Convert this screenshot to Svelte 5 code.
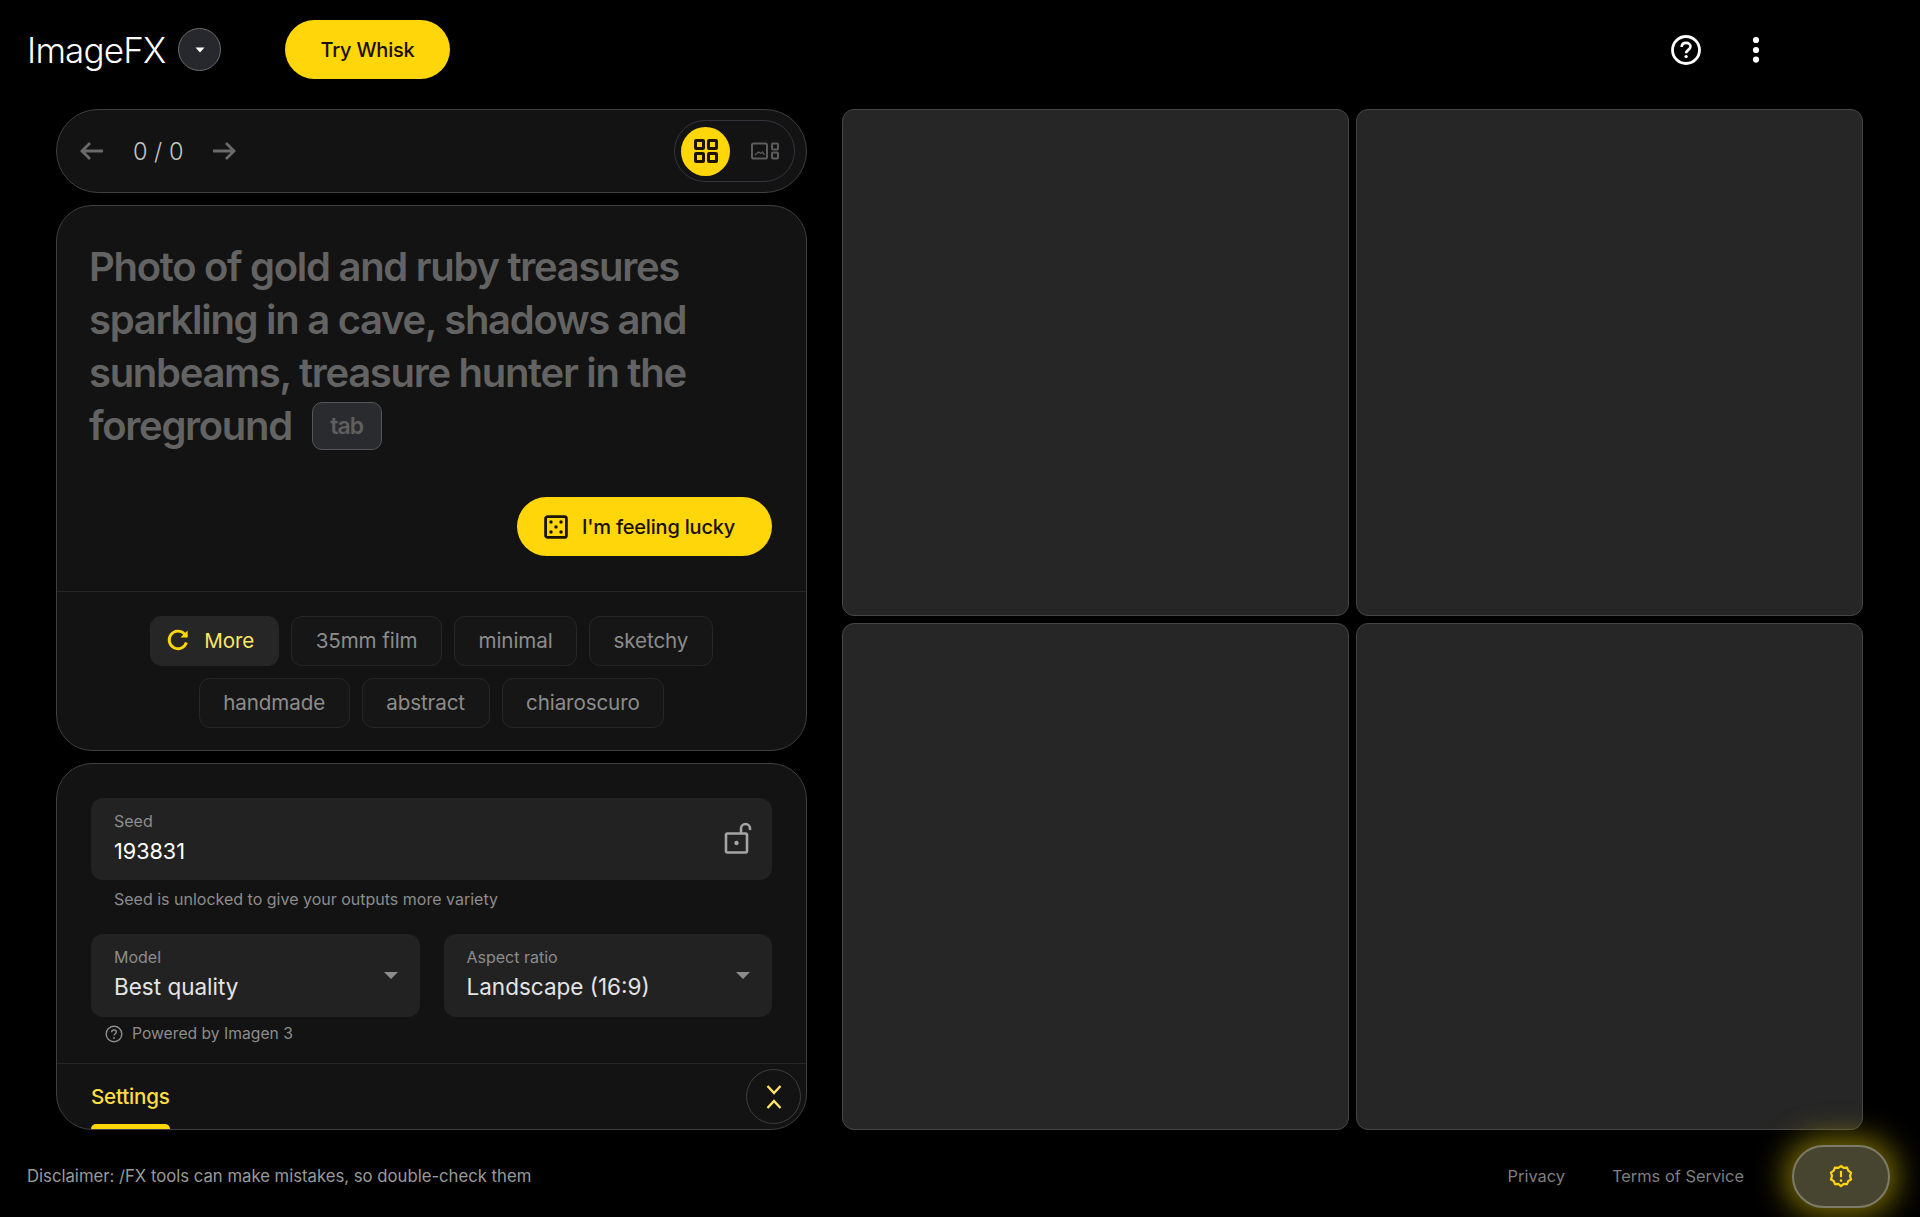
<script>
  const chipRows = [
    ['35mm film', 'minimal', 'sketchy'],
    ['handmade', 'abstract', 'chiaroscuro'],
  ]
  const tiles = [1, 2, 3, 4]
</script>

<div class="page">
  <header class="topbar">
    <div class="brand">
      <span class="logo">ImageFX</span>
      <button class="brand-menu" aria-label="Switch tool">
        <svg width="12" height="8" viewBox="0 0 12 8"><path d="M1.500 1.500h9L6 6.500z" fill="#fff" /></svg>
      </button>
      <button class="whisk">Try Whisk</button>
    </div>
    <div class="top-actions">
      <svg class="help" width="36" height="36" viewBox="0 0 36 36" fill="none" stroke="#fff">
        <circle cx="18" cy="18" r="13.500" stroke-width="2.800" />
        <path d="M13.600 15c.2-2.600 2-4.100 4.500-4.100s4.400 1.500 4.400 3.700c0 3.300-4.400 3.300-4.400 6.600" stroke-width="2.600" />
        <circle cx="18.100" cy="24.600" r="1.700" fill="#fff" stroke="none" />
      </svg>
      <svg width="12" height="30" viewBox="0 0 12 30" fill="#fff">
        <circle cx="6" cy="5" r="3.100" /><circle cx="6" cy="15" r="3.100" /><circle cx="6" cy="24.600" r="3.100" />
      </svg>
    </div>
  </header>

  <main class="workspace">
    <section class="controls">
      <div class="pager card">
        <div class="pager-nav">
          <svg width="26" height="22" viewBox="0 0 26 22" fill="none" stroke="#6a6a6a" stroke-width="2.800">
            <path d="M25 11H4M12 3l-8 8 8 8" />
          </svg>
          <span class="count">0 / 0</span>
          <svg width="26" height="22" viewBox="0 0 26 22" fill="none" stroke="#6a6a6a" stroke-width="2.800">
            <path d="M1 11h21M14 3l8 8-8 8" />
          </svg>
        </div>
        <div class="view-toggle">
          <span class="view-on">
            <svg width="24" height="24" viewBox="0 0 24 24" fill="none" stroke="#1a1400" stroke-width="3">
              <rect x="1.500" y="1.500" width="8" height="8" rx=".6" />
              <rect x="14.500" y="1.500" width="8" height="8" rx=".6" />
              <rect x="1.500" y="14.500" width="8" height="8" rx=".6" />
              <rect x="14.500" y="14.500" width="8" height="8" rx=".6" />
            </svg>
          </span>
          <svg class="view-off" width="28" height="18" viewBox="0 0 28 18" fill="none" stroke="#5c5c5c" stroke-width="2">
            <rect x="1" y="1.500" width="15" height="15" rx="1.600" />
            <path d="M4 13l3.500-3 2.500 1.500 1.500-1.500 2 3" stroke-width="1.300" />
            <rect x="21" y="1.500" width="6" height="6" rx="1" />
            <rect x="21" y="10.500" width="6" height="6" rx="1" />
          </svg>
        </div>
      </div>

      <div class="prompt card">
        <div class="prompt-body">
          <p class="prompt-text">
            Photo of gold and ruby treasures sparkling in a cave, shadows and sunbeams, treasure hunter in the
            foreground <span class="tab-key">tab</span>
          </p>
          <button class="lucky">
            <svg width="24" height="24" viewBox="0 0 24 24" fill="none">
              <rect x="1.600" y="1.600" width="20.800" height="20.800" rx="2" stroke="#1a1400" stroke-width="2.800" />
              <g fill="#1a1400">
                <circle cx="7" cy="7" r="1.700" /><circle cx="17" cy="7" r="1.700" /><circle cx="12" cy="12" r="1.700" />
                <circle cx="7" cy="17" r="1.700" /><circle cx="17" cy="17" r="1.700" />
              </g>
            </svg>
            I'm feeling lucky
          </button>
        </div>
        <div class="chips">
          <div class="chip-row">
            <button class="chip more">
              <svg width="24" height="24" viewBox="0 0 24 24" fill="none" stroke="#ffd60a" stroke-width="2.800">
                <path d="M20.400 14.500a8.800 8.800 0 1 1-2-8.600L21 8.400" />
                <path d="M21.600 2.400v7.200h-7.200" fill="#ffd60a" stroke="none" />
              </svg>
              More
            </button>
            {#each chipRows[0] as chip}
              <button class="chip">{chip}</button>
            {/each}
          </div>
          <div class="chip-row">
            {#each chipRows[1] as chip}
              <button class="chip">{chip}</button>
            {/each}
          </div>
        </div>
      </div>

      <div class="settings card">
        <div class="fields">
          <div class="field seed">
            <div>
              <div class="field-label">Seed</div>
              <div class="field-value seed-value">193831</div>
            </div>
            <svg width="28" height="34" viewBox="0 0 28 34" fill="none" stroke="#a5a5a5" stroke-width="2.600">
              <rect x="2" y="12.500" width="21" height="19" rx="1.500" />
              <circle cx="12.500" cy="22" r="2.200" fill="#a5a5a5" stroke="none" />
              <path d="M17 12V7.500a4.500 4.500 0 0 1 9 0V9" />
            </svg>
          </div>
          <p class="hint">Seed is unlocked to give your outputs more variety</p>
          <div class="field-row">
            <div class="field select">
              <div>
                <div class="field-label">Model</div>
                <div class="field-value">Best quality</div>
              </div>
              <span class="caret"></span>
            </div>
            <div class="field select">
              <div>
                <div class="field-label">Aspect ratio</div>
                <div class="field-value">Landscape (16:9)</div>
              </div>
              <span class="caret"></span>
            </div>
          </div>
          <div class="powered">
            <svg width="18" height="18" viewBox="0 0 18 18" fill="none" stroke="#8e8e8e" stroke-width="1.400">
              <circle cx="9" cy="9" r="7.800" />
              <path d="M6.600 7.200c.1-1.400 1-2.200 2.400-2.200s2.400.8 2.400 2c0 1.800-2.400 1.800-2.400 3.600" />
              <circle cx="9" cy="13" r=".9" fill="#8e8e8e" stroke="none" />
            </svg>
            Powered by Imagen 3
          </div>
        </div>
        <div class="tabs">
          <div class="tab-active">Settings</div>
          <button class="collapse" aria-label="Collapse">
            <svg width="16" height="26" viewBox="0 0 16 26" fill="none" stroke="#ffe566" stroke-width="2.400">
              <path d="M1.500 2l6.500 7 6.500-7M1.500 24l6.500-7 6.500 7" />
            </svg>
          </button>
        </div>
      </div>
    </section>

    <section class="gallery">
      {#each tiles as tile (tile)}
        <div class="tile"></div>
      {/each}
    </section>
  </main>

  <footer class="footer">
    <span>Disclaimer: /FX tools can make mistakes, so double-check them</span>
    <div class="footer-right">
      <span class="link privacy">Privacy</span>
      <span class="link">Terms of Service</span>
      <button class="notice" aria-label="Notice">
        <svg width="24" height="24" viewBox="0 0 24 24" fill="none" stroke="#ffd60a" stroke-width="2.200">
          <path d="M12 2l2.700 1.900 3.300-.3 1.300 3 2.700 2L21 12l1 3.400-2.700 1.600-1.300 3.100-3.300-.2L12 22l-2.700-2.100-3.300.2-1.300-3.100L2 15.400 3 12 2 8.600l2.700-2 1.300-3 3.300.3z" />
          <path d="M12 6.800v6.400" />
          <circle cx="12" cy="16.600" r="1.300" fill="#ffd60a" stroke="none" />
        </svg>
      </button>
    </div>
  </footer>
</div>

<style>
  :global(body) {
    margin: 0;
    background: #000;
  }
  .page {
    width: 1920px;
    height: 1217px;
    background: #000;
    color: #fff;
    font-family: Inter, 'Liberation Sans', sans-serif;
    display: flex;
    flex-direction: column;
    overflow: hidden;
  }
  button {
    font-family: inherit;
    border: none;
    padding: 0;
    cursor: pointer;
  }
  .topbar {
    height: 109px;
    flex: none;
    box-sizing: border-box;
    padding: 20px 158px 0 27px;
    display: flex;
    justify-content: space-between;
    align-items: flex-start;
  }
  .brand {
    display: flex;
    align-items: center;
    height: 59px;
  }
  .logo {
    font-size: 35px;
    font-weight: 300;
    letter-spacing: -0.8px;
    width: 151px;
  }
  .brand-menu {
    width: 43px;
    height: 43px;
    border-radius: 50%;
    background: #26282d;
    border: 1.5px solid #6c6c6c;
    display: flex;
    align-items: center;
    justify-content: center;
  }
  .whisk {
    margin-left: 64px;
    width: 165px;
    height: 59px;
    border-radius: 30px;
    background: #ffd60a;
    color: #1a1000;
    font-size: 20px;
    font-weight: 500;
    letter-spacing: -0.2px;
  }
  .top-actions {
    height: 59px;
    display: flex;
    align-items: center;
    gap: 46px;
  }
  .workspace {
    height: 1022px;
    flex: none;
    box-sizing: border-box;
    padding: 0 56px;
    display: flex;
    gap: 35px;
  }
  .controls {
    width: 751px;
    height: 1021px;
    display: flex;
    flex-direction: column;
    gap: 12px;
  }
  .card {
    background: #131313;
    border: 1.5px solid #3f3f3f;
    box-sizing: border-box;
  }
  .pager {
    height: 84px;
    border-radius: 42px;
    padding: 0 11px 0 21px;
    display: flex;
    align-items: center;
    justify-content: space-between;
  }
  .pager-nav {
    display: flex;
    align-items: center;
    gap: 29px;
  }
  .count {
    font-size: 23.5px;
    font-weight: 300;
    color: #c4c4c4;
  }
  .view-toggle {
    width: 121px;
    height: 62px;
    box-sizing: border-box;
    border: 1.5px solid #33353b;
    border-radius: 31px;
    padding: 0 15px 0 6px;
    display: flex;
    align-items: center;
    justify-content: space-between;
  }
  .view-on {
    width: 49px;
    height: 49px;
    border-radius: 50%;
    background: #ffd60a;
    display: flex;
    align-items: center;
    justify-content: center;
  }
  .prompt {
    height: 546px;
    border-radius: 36px;
    display: flex;
    flex-direction: column;
  }
  .prompt-body {
    height: 386px;
    box-sizing: border-box;
    padding: 34px 34px 35px 32px;
    border-bottom: 1.5px solid #262626;
    display: flex;
    flex-direction: column;
    align-items: flex-end;
    justify-content: space-between;
  }
  .prompt-text {
    margin: 0;
    align-self: stretch;
    font-size: 40px;
    line-height: 53px;
    font-weight: 600;
    letter-spacing: -1.3px;
    color: #636363;
  }
  .tab-key {
    display: inline-block;
    vertical-align: 6px;
    margin-left: 11px;
    width: 70px;
    height: 48px;
    line-height: 46px;
    box-sizing: border-box;
    text-align: center;
    font-size: 23px;
    font-weight: 600;
    letter-spacing: -1px;
    color: #5f5f5f;
    background: #2a2b2e;
    border: 1.5px solid #55565a;
    border-radius: 10px;
  }
  .lucky {
    width: 255px;
    height: 59px;
    padding-right: 10px;
    border-radius: 30px;
    background: #ffd60a;
    color: #1a1000;
    font-size: 20px;
    font-weight: 500;
    letter-spacing: -0.2px;
    display: flex;
    align-items: center;
    justify-content: center;
    gap: 14px;
  }
  .chips {
    flex: 1;
    padding-top: 24px;
    display: flex;
    flex-direction: column;
    align-items: center;
    gap: 12px;
  }
  .chip-row {
    display: flex;
    gap: 12px;
  }
  .chip {
    height: 50px;
    box-sizing: border-box;
    padding: 0 23.5px 2px;
    border-radius: 11px;
    background: #161616;
    border: 1.5px solid #262626;
    color: #8c8c8c;
    font-size: 20.6px;
    font-weight: 400;
    letter-spacing: -0.1px;
  }
  .more {
    display: flex;
    align-items: center;
    gap: 14px;
    padding: 0 24px 2px 15px;
    background: #262626;
    border-color: #262626;
    color: #ffe566;
  }
  .settings {
    height: 367px;
    border-radius: 36px;
    display: flex;
    flex-direction: column;
    overflow: hidden;
  }
  .fields {
    height: 300px;
    flex: none;
    box-sizing: border-box;
    padding: 34px 34px 0;
    border-bottom: 1.5px solid #262626;
  }
  .field {
    background: #222222;
    border-radius: 12px;
    box-sizing: border-box;
    display: flex;
    align-items: center;
    justify-content: space-between;
    padding: 0 20px 0 23px;
  }
  .seed {
    height: 82px;
    padding-bottom: 2px;
  }
  .field-label {
    font-size: 16px;
    line-height: 20px;
    color: #8c8c8c;
  }
  .field-value {
    font-size: 22.5px;
    line-height: 30px;
    margin-top: 5px;
    color: #e4e4e4;
  }
  .seed-value {
    font-size: 21.6px;
    color: #fff;
  }
  .hint {
    margin: 0;
    height: 54px;
    padding: 9px 0 0 23px;
    box-sizing: border-box;
    font-size: 16px;
    line-height: 20px;
    color: #8c8c8c;
  }
  .field-row {
    display: flex;
    gap: 24px;
  }
  .select {
    flex: 1;
    height: 83px;
    padding-right: 22px;
    padding-bottom: 3px;
  }
  .caret {
    width: 0;
    height: 0;
    margin-top: 3px;
    border-left: 7.5px solid transparent;
    border-right: 7.5px solid transparent;
    border-top: 7.5px solid #8c8c8c;
  }
  .powered {
    display: flex;
    align-items: center;
    gap: 9px;
    margin: 8px 0 0 14px;
    font-size: 15.7px;
    line-height: 18px;
    color: #8c8c8c;
  }
  .tabs {
    flex: 1;
    padding: 5px 5px 0 34px;
    display: flex;
    justify-content: space-between;
  }
  .tab-active {
    position: relative;
    width: 79px;
    line-height: 56px;
    font-size: 20.6px;
    font-weight: 500;
    letter-spacing: -0.2px;
    color: #ffdf40;
    white-space: nowrap;
  }
  .tab-active::after {
    content: '';
    position: absolute;
    left: 0;
    right: 0;
    bottom: 0;
    height: 5px;
    background: #ffd60a;
    border-radius: 5px 5px 0 0;
  }
  .collapse {
    width: 55px;
    height: 55px;
    border-radius: 50%;
    background: transparent;
    border: 1.5px solid #3f3f3f;
    display: flex;
    align-items: center;
    justify-content: center;
  }
  .gallery {
    width: 1021px;
    display: grid;
    grid-template-columns: 507px 507px;
    grid-template-rows: 507px 507px;
    gap: 7px;
  }
  .tile {
    background: #262626;
    border: 1.5px solid #464646;
    border-radius: 12px;
  }
  .footer {
    height: 84px;
    flex: none;
    margin-top: 3px;
    box-sizing: border-box;
    padding: 0 30px 0 27px;
    display: flex;
    align-items: center;
    justify-content: space-between;
    font-size: 16.7px;
    color: #9a9a9a;
  }
  .footer-right {
    display: flex;
    align-items: center;
  }
  .link {
    color: #7f7f7f;
    font-size: 16.4px;
  }
  .privacy {
    margin-right: 47px;
  }
  .notice {
    margin-left: 48px;
    width: 98px;
    height: 63px;
    border-radius: 32px;
    background: #47442f;
    border: 2px solid #7d7b68;
    box-shadow: 0 0 30px 8px rgba(214, 190, 10, 0.55);
    display: flex;
    align-items: center;
    justify-content: center;
  }
</style>
